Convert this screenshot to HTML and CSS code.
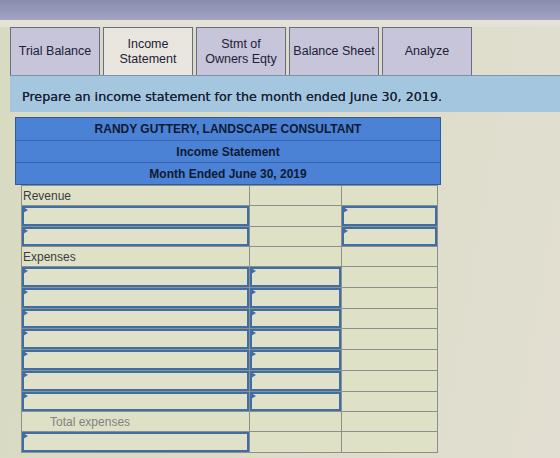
FILE: index.html
```html
<!DOCTYPE html>
<html>
<head>
<meta charset="utf-8">
<title>Income Statement</title>
<link rel="stylesheet" href="styles.css">
</head>
<body>
  <!-- window strip -->
  <div class="topbar"></div>

  <!-- worksheet tabs -->
  <nav class="tabs">
    <div class="tab">Trial Balance</div>
    <div class="tab active">Income<br>Statement</div>
    <div class="tab">Stmt of<br>Owners Eqty</div>
    <div class="tab">Balance Sheet</div>
    <div class="tab">Analyze</div>
  </nav>

  <div class="prompt">Prepare an income statement for the month ended June 30, 2019.</div>

  <!-- statement -->
  <div class="sheet">
    <div class="head">
      <div class="head-row">RANDY GUTTERY, LANDSCAPE CONSULTANT</div>
      <div class="head-row">Income Statement</div>
      <div class="head-row">Month Ended June 30, 2019</div>
    </div>

    <table class="grid">
      <colgroup>
        <col class="c1"><col class="c2"><col class="c3">
      </colgroup>
      <tr><td class="label">Revenue</td><td></td><td></td></tr>
      <tr><td><div class="box"></div></td><td></td><td><div class="box"></div></td></tr>
      <tr><td><div class="box"></div></td><td></td><td><div class="box"></div></td></tr>
      <tr><td class="label">Expenses</td><td></td><td></td></tr>
      <tr><td><div class="box"></div></td><td><div class="box"></div></td><td></td></tr>
      <tr><td><div class="box"></div></td><td><div class="box"></div></td><td></td></tr>
      <tr><td><div class="box"></div></td><td><div class="box"></div></td><td></td></tr>
      <tr><td><div class="box"></div></td><td><div class="box"></div></td><td></td></tr>
      <tr><td><div class="box"></div></td><td><div class="box"></div></td><td></td></tr>
      <tr><td><div class="box"></div></td><td><div class="box"></div></td><td></td></tr>
      <tr><td><div class="box"></div></td><td><div class="box"></div></td><td></td></tr>
      <tr><td class="label total">Total expenses</td><td></td><td></td></tr>
      <tr><td><div class="box"></div></td><td></td><td></td></tr>
    </table>
  </div>
</body>
</html>
```

FILE: styles.css
```css
* {box-sizing: border-box;}

body {
  margin: 0;
  height: 458px;
  overflow: hidden;
  font-family: "Liberation Sans", Arial, sans-serif;
  background: linear-gradient(100deg, #d8dac2 0%, #dcdcc7 55%, #e2dfd2 100%);
}

.topbar {
  height: 27px;
  background: linear-gradient(#8a8cae, #a3a4c2);
  border-bottom: 7px solid #e4e1d6;
}

/* tabs */
.tabs {
  display: flex;
  gap: 3px;
  padding-left: 10px;
}

.tab {
  width: 90px;
  height: 48px;
  display: flex;
  align-items: center;
  justify-content: center;
  text-align: center;
  font-size: 12.5px;
  line-height: 15px;
  color: #1e2036;
  background: #c6c5d9;
  border: 1px solid #6d6b82;
  border-bottom: none;
}

.tab.active {
  background: #e8e6de;
}

.prompt {
  margin-left: 10px;
  height: 37px;
  padding: 13px 0 0 12px;
  font-family: "DejaVu Sans", Verdana, sans-serif;
  font-size: 12.7px;
  color: #1a2335;
  text-shadow: 0 0 0.4px #1a2335;
  background: #a4c7df;
  border-top: 1px solid #7d93a8;
}

/* statement */
.sheet {
  margin: 5px 0 0 15px;
  width: 426px;
}

.head {
  background: #4b82d5;
  border: 1px solid #2f5a9a;
}

.head-row {
  height: 22px;
  padding-top: 4px;
  text-align: center;
  font-family: "Liberation Sans Narrow", "Liberation Sans", sans-serif;
  font-weight: bold;
  font-size: 12px;
  color: #0e1a33;
  border-top: 1px solid #3465ae;
}

.head-row:first-child {
  border-top: none;
}

.grid {
  margin-left: 6px;
  width: 416px;
  border-collapse: collapse;
  table-layout: fixed;
  background: #dfe1c6;
}

.c1 {width: 228px;}
.c2 {width: 92px;}
.c3 {width: 96px;}

.grid td {
  height: 20px;
  padding: 0;
  border: 1px solid #8d908a;
  vertical-align: top;
}

.grid td.label {
  padding: 3px 0 0 1px;
  font-size: 12px;
  color: #3a3d3c;
}

.grid td.total {
  padding-left: 28px;
  color: #7f827f;
}

/* input field */
.box {
  position: relative;
  height: 19.7px;
  border: 2px solid #3f6ea6;
  background: #dfe2c8;
}

.box::before {
  content: "";
  position: absolute;
  left: -1px;
  top: -1px;
  border-left: 5px solid #3f6ea6;
  border-top: 3px solid transparent;
  border-bottom: 3px solid transparent;
}
```
